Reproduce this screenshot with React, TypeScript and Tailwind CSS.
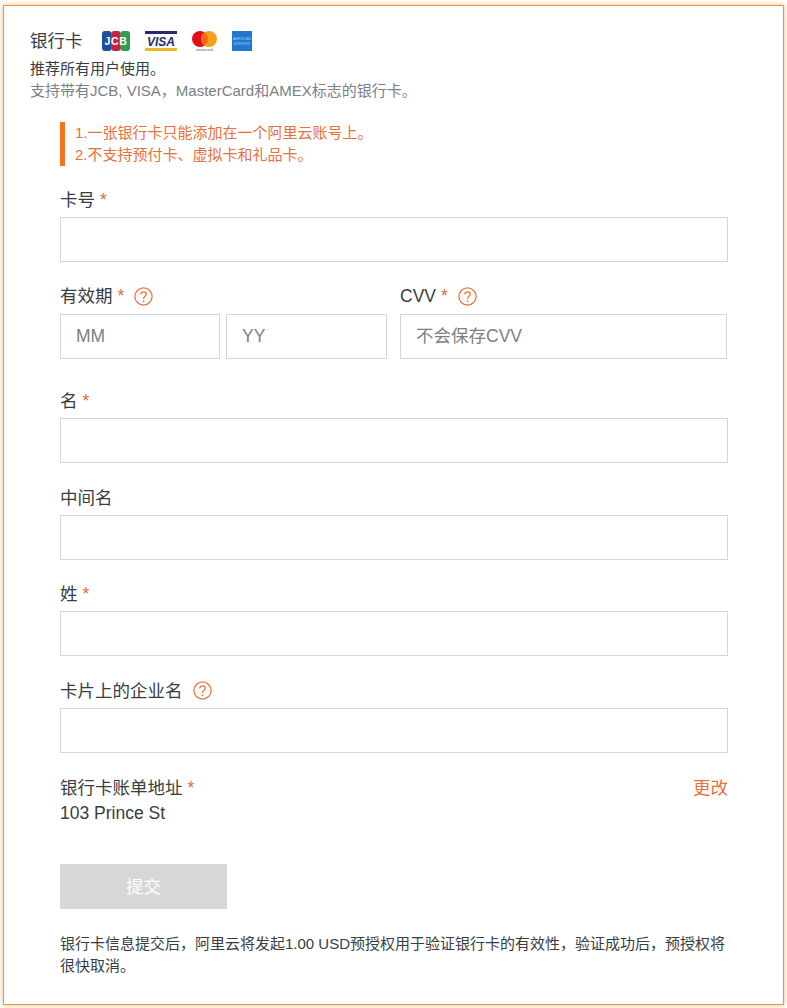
const FONT = "font-['Liberation_Sans','Noto_Sans_CJK_SC',sans-serif]";

function Star() {
  return <span className="ml-[5px] text-[#e8683a]">*</span>;
}

function Help() {
  return (
    <svg width="19" height="19" viewBox="0 0 19 19" className="ml-[10px] shrink-0" fill="none">
      <circle cx="9.5" cy="9.5" r="8.6" stroke="#e9743f" strokeWidth="1.3" />
      <path d="M6.8 7.4c.1-1.7 1.2-2.6 2.8-2.6 1.6 0 2.7 1 2.7 2.3 0 1.1-.6 1.7-1.5 2.3-.8.6-1.2 1.1-1.2 2.1v.4" stroke="#e9743f" strokeWidth="1.3" />
      <circle cx="9.6" cy="14.2" r=".9" fill="#e9743f" />
    </svg>
  );
}

function Input({ placeholder = "", className = "w-full" }: { placeholder?: string; className?: string }) {
  return (
    <div className={`h-[45px] border border-[#d5d7d9] bg-white pl-[15px] text-[17.5px] leading-[43px] text-[#7b8086] ${className}`}>
      {placeholder}
    </div>
  );
}

function Field({ label, required, help }: { label: string; required?: boolean; help?: boolean }) {
  return (
    <div className="mb-[22.67px]">
      <div className="mb-[5px] flex h-[24px] items-center text-[17.5px] text-[#373d41]">
        {label}
        {required && <Star />}
        {help && <Help />}
      </div>
      <Input />
    </div>
  );
}

function Logos() {
  return (
    <div className="ml-[19px] flex items-center">
      <svg width="28" height="20" viewBox="0 0 28 20">
        <rect x="0" y="0" width="9.6" height="20" rx="3" fill="#1c4f9c" />
        <rect x="9.2" y="0" width="9.6" height="20" rx="3" fill="#c9213f" />
        <rect x="18.4" y="0" width="9.6" height="20" rx="3" fill="#2f9e4a" />
        <text x="14" y="13.5" textAnchor="middle" fontSize="10.5" fontWeight="700" fontFamily="Liberation Sans" fill="#fff" letterSpacing=".6">JCB</text>
      </svg>
      <svg width="32" height="20" viewBox="0 0 32 20" className="ml-[15px]">
        <rect width="32" height="3" fill="#232c6e" />
        <rect y="17" width="32" height="3" fill="#eab72b" />
        <text x="16" y="14.5" textAnchor="middle" fontSize="12" fontWeight="700" fontStyle="italic" fontFamily="Liberation Sans" fill="#232c6e">VISA</text>
      </svg>
      <svg width="25" height="20" viewBox="0 0 25 20" className="ml-[15px]">
        <circle cx="8" cy="8" r="8" fill="#e30d18" />
        <circle cx="17" cy="8" r="8" fill="#f6a020" />
        <path d="M12.5 1.4a8 8 0 0 1 0 13.2a8 8 0 0 1 0-13.2z" fill="#f46a14" />
        <text x="12.5" y="19.6" textAnchor="middle" fontSize="3.4" fontFamily="Liberation Sans" fill="#555">mastercard</text>
      </svg>
      <svg width="20" height="20" viewBox="0 0 20 20" className="ml-[15px]">
        <rect width="20" height="20" fill="#1f77cf" />
        <text x="10" y="9" textAnchor="middle" fontSize="3.4" fontFamily="Liberation Sans" fill="#a9cdf0">AMERICAN</text>
        <text x="10" y="13.5" textAnchor="middle" fontSize="3.4" fontFamily="Liberation Sans" fill="#a9cdf0">EXPRESS</text>
      </svg>
    </div>
  );
}

export default function App() {
  return (
    <div className={`h-[1008px] w-[787px] bg-white pl-[3px] pt-[5px] ${FONT}`}>
      <div className="h-[1000px] w-[781px] border border-[#ec9148] bg-white pl-[26px] pr-[55px] pt-[22px] shadow-[0_0_5px_rgba(250,150,60,0.7)]">
        <div className="flex h-[26px] items-center text-[17.5px] text-[#373d41]">
          银行卡
          <Logos />
        </div>
        <div className="mt-[4px] h-[22px] text-[15px] leading-[22px] text-[#373d41]">推荐所有用户使用。</div>
        <div className="h-[22px] text-[15px] leading-[22px] text-[#7b8086]">支持带有JCB, VISA，MasterCard和AMEX标志的银行卡。</div>

        <div className="ml-[30px] mt-[20px] border-l-[5px] border-[#f5741f] pl-[10px] text-[15px] leading-[22px] text-[#e8703a]">
          <div>1.一张银行卡只能添加在一个阿里云账号上。</div>
          <div>2.不支持预付卡、虚拟卡和礼品卡。</div>
        </div>

        <div className="ml-[30px] mt-[22px]">
          <Field label="卡号" required />

          <div className="-mt-[0.67px] mb-[30px] flex">
            <div className="w-[327px] shrink-0">
              <div className="mb-[6px] flex h-[24px] items-center text-[17.5px] text-[#373d41]">
                有效期
                <Star />
                <Help />
              </div>
              <div className="flex gap-[6px]">
                <Input placeholder="MM" className="w-[160px]" />
                <Input placeholder="YY" className="w-[161px]" />
              </div>
            </div>
            <div className="ml-[13px] w-[327px]">
              <div className="mb-[6px] flex h-[24px] items-center text-[17.5px] text-[#373d41]">
                CVV
                <Star />
                <Help />
              </div>
              <Input placeholder="不会保存CVV" />
            </div>
          </div>

          <Field label="名" required />
          <Field label="中间名" />
          <Field label="姓" required />
          <Field label="卡片上的企业名" help />

          <div className="flex h-[24px] items-center justify-between text-[17.5px] text-[#373d41]">
            <div>
              银行卡账单地址
              <Star />
            </div>
            <span className="text-[#e8703a]">更改</span>
          </div>
          <div className="mt-[1.5px] h-[24px] text-[17.5px] leading-[24px] text-[#373d41]">103 Prince St</div>

          <div className="mt-[39px] flex h-[45px] w-[167px] items-center justify-center bg-[#d5d7d9] text-[17.5px] text-white">提交</div>

          <div className="mt-[24px] text-[15px] leading-[22px] text-[#373d41]">
            银行卡信息提交后，阿里云将发起1.00 USD预授权用于验证银行卡的有效性，验证成功后，预授权将很快取消。
          </div>
        </div>
      </div>
    </div>
  );
}
